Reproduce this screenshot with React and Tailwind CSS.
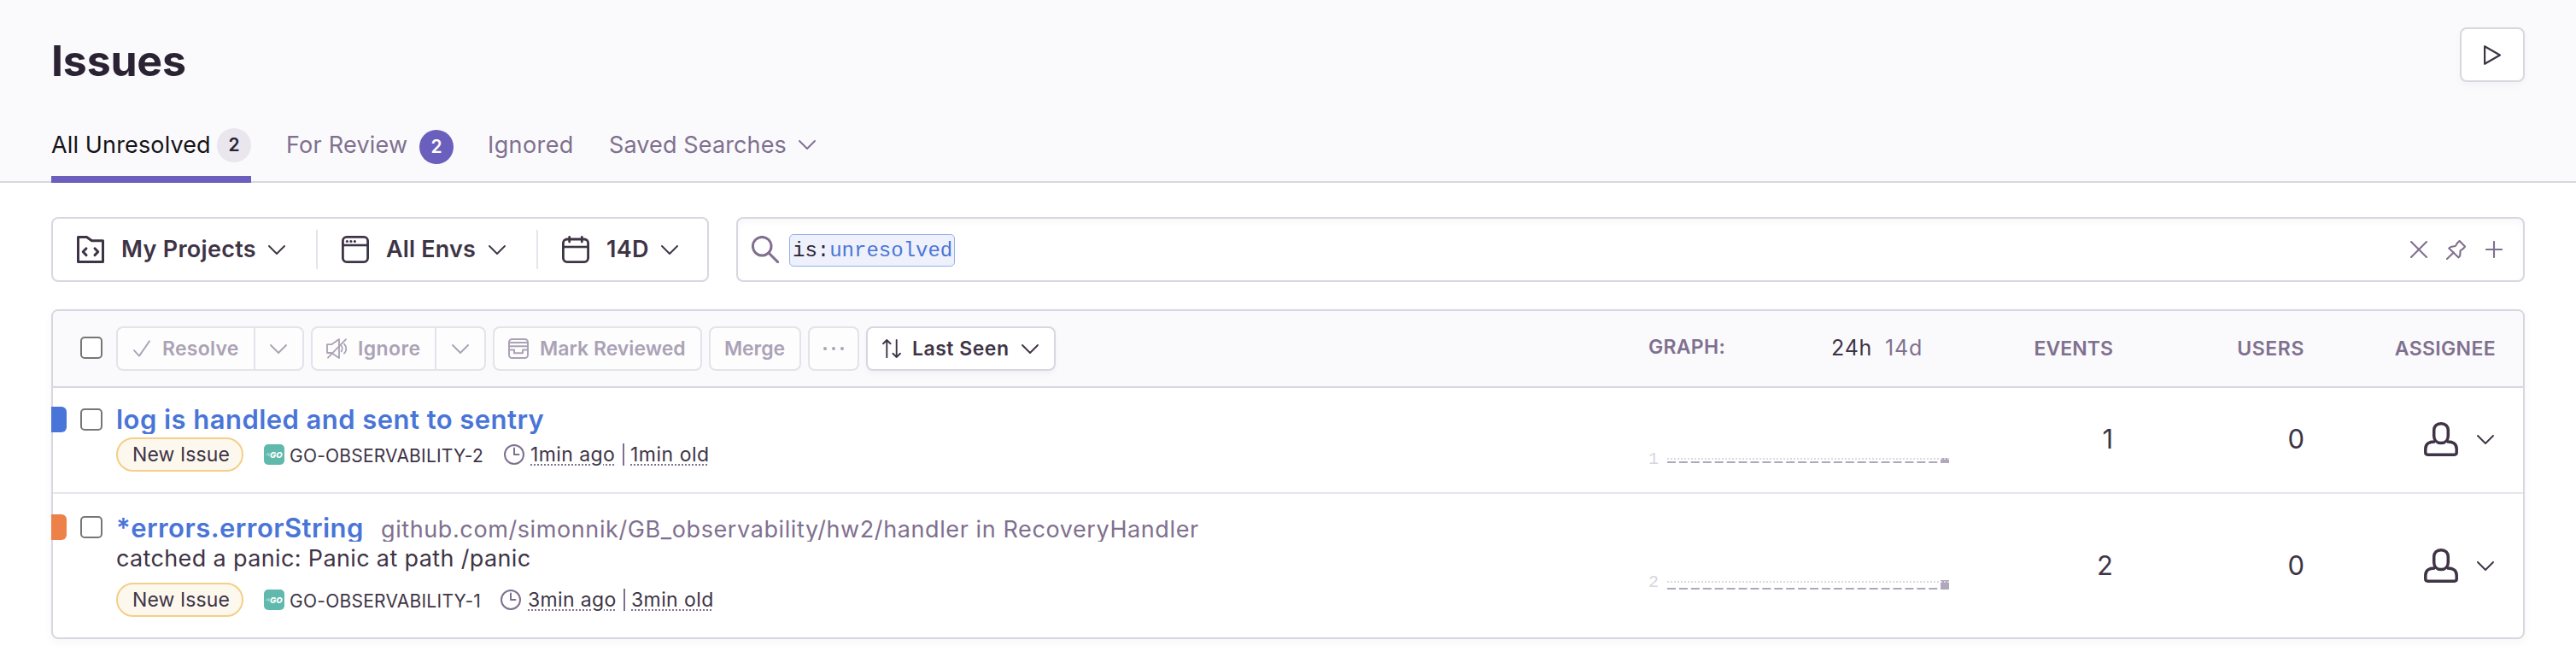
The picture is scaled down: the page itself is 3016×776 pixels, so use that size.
import React from "react";

function Chevron({ className = "" }) {
  return (
    <svg className={`h-[11px] w-5 shrink-0 ${className}`} viewBox="0 0 20 11" fill="none" stroke="currentColor" strokeWidth="1.9" strokeLinecap="round" strokeLinejoin="round">
      <path d="M1 1l9 9 9-9" />
    </svg>
  );
}

function ProjectIcon() {
  return (
    <svg className="size-8 shrink-0" viewBox="0 0 32 32" fill="none" stroke="currentColor" strokeWidth="3" strokeLinejoin="round" strokeLinecap="round">
      <path d="M1.5 1.5H11.5L17.5 5.8H30.5V30.5H1.5Z" />
      <path d="M11 14.8L7.2 18.8L11 22.6M21 14.8L24.8 18.8L21 22.6" />
    </svg>
  );
}

function WindowIcon() {
  return (
    <svg className="size-8 shrink-0" viewBox="0 0 32 32" fill="none" stroke="currentColor" strokeWidth="2.8">
      <rect x="1.4" y="1.4" width="29.2" height="29.2" rx="4.5" />
      <path d="M1.5 11H30.5" strokeWidth="2.6" />
      <g fill="currentColor" stroke="none">
        <circle cx="6.4" cy="6.5" r="1.6" />
        <circle cx="10.9" cy="6.5" r="1.6" />
        <circle cx="15.4" cy="6.5" r="1.6" />
      </g>
    </svg>
  );
}

function CalendarIcon() {
  return (
    <svg className="size-8 shrink-0" viewBox="0 0 32 32" fill="none" stroke="currentColor" strokeWidth="2.8" strokeLinecap="round">
      <rect x="1.4" y="4" width="29.2" height="26.6" rx="4.5" />
      <path d="M2 13H30" strokeWidth="2.6" strokeLinecap="butt" />
      <path d="M8.7 1.4V7M23.3 1.4V7" />
    </svg>
  );
}

function SearchIcon() {
  return (
    <svg className="size-8 shrink-0" viewBox="0 0 32 32" fill="none" stroke="currentColor" strokeWidth="3" strokeLinecap="round">
      <circle cx="12.2" cy="12.2" r="10.8" />
      <path d="M20 20L30.6 30.6" />
    </svg>
  );
}

function MuteIcon() {
  return (
    <svg className="size-6 shrink-0" viewBox="0 0 24 24" fill="none" stroke="currentColor" strokeWidth="1.8" strokeLinecap="round" strokeLinejoin="round">
      <path d="M1 7.2H6L15 1V23L6 17H1Z" />
      <path d="M2 22.6L23 1.2" />
      <path d="M17.6 8.8C19 10.6 19 13.6 17.6 15.4" />
      <path d="M21 6.6C24 9.8 24 14.6 21 17.6" />
    </svg>
  );
}

function InboxIcon() {
  return (
    <svg className="size-6 shrink-0" viewBox="0 0 24 24" fill="none" stroke="currentColor" strokeWidth="2" strokeLinejoin="round">
      <rect x="1" y="1" width="22" height="22" rx="3.5" />
      <path d="M1 5H23M1 9.2H23" />
      <path d="M1 13.4H7V17.2H17V13.4H23" />
    </svg>
  );
}

function UserIcon() {
  return (
    <svg className="size-10 shrink-0" viewBox="0 0 40 40" fill="none" stroke="currentColor" strokeWidth="3.5" strokeLinejoin="round">
      <path d="M20 1.8C14.6 1.8 11.7 5 11.7 9.6V16.2C11.7 21.4 15 24.6 20 24.6C25 24.6 28.3 21.4 28.3 16.2V9.6C28.3 5 25.4 1.8 20 1.8Z" />
      <path d="M13 23C6 22.7 1.8 25.4 1.8 31.4V35.6C1.8 37.3 2.8 38.2 4.4 38.2H35.6C37.2 38.2 38.2 37.3 38.2 35.6V31.4C38.2 25.4 34 22.7 27 23" />
    </svg>
  );
}

function ClockIcon() {
  return (
    <svg className="size-6 shrink-0 text-[#80708f]" viewBox="0 0 24 24" fill="none" stroke="currentColor" strokeWidth="2" strokeLinecap="round" strokeLinejoin="round">
      <circle cx="12" cy="12" r="11" />
      <path d="M12 4.5V12H17.5" />
    </svg>
  );
}

function GoBadge() {
  return (
    <svg className="ml-6 size-6 shrink-0" viewBox="0 0 24 24">
      <rect width="24" height="24" rx="5" fill="#5fb9ad" />
      <path d="M3.6 11H7M2 12.2H6.6M5 13.4H6.6" stroke="#fff" strokeWidth="0.6" opacity="0.8" />
      <text x="7" y="15.6" fontFamily="Inter, sans-serif" fontSize="9.4" fontWeight="800" fontStyle="italic" textLength="14.6" lengthAdjust="spacingAndGlyphs" fill="#fff">GO</text>
    </svg>
  );
}

function Checkbox({ className = "" }) {
  return <span className={`size-[26px] shrink-0 rounded-[5px] border-2 border-[#767676] bg-white ${className}`} />;
}

function Divider() {
  return <span className="ml-9 mr-7 h-[46px] w-0.5 shrink-0 bg-[#e6e4ec]" />;
}

const action = "flex h-[52px] shrink-0 items-center rounded-lg border-2 border-[#e4e2ea] bg-[#fdfdfe] text-[23px] font-semibold text-[#aba2b5]";

function Chart({ label, tall }) {
  const dashes = Array.from({ length: 23 }, (_, i) => i);
  return (
    <div className={`flex w-[352px] shrink-0 items-start ${tall ? "mt-24" : "mt-[72px]"}`}>
      <span className={`w-[22px] font-['Liberation_Mono',monospace] text-[20px] text-[#d9d5e0] ${tall ? "leading-4" : "leading-6"}`}>{label}</span>
      <svg className="h-4 w-[330px]" viewBox="0 0 330 16">
        {dashes.map((i) => (
          <rect key={i} x={i * 13.92} y="14" width="10" height="2" fill="#b0a8ba" />
        ))}
        <rect x="320" y={tall ? 5 : 10} width="10" height={tall ? 11 : 6} fill="#b0a8ba" />
        <path d={tall ? "M0 7H330" : "M0 11H330"} stroke="#dcd9e3" strokeWidth="2" strokeDasharray="2 2" />
      </svg>
    </div>
  );
}

function RightCells({ label, tall, events, users }) {
  return (
    <div className="ml-auto flex shrink-0 items-start pr-8">
      <Chart label={label} tall={tall} />
      <div className={`flex h-[60px] items-center text-[31px] ${tall ? "mt-[54px]" : "mt-[30px]"}`}>
        <span className="w-48 text-right">{events}</span>
        <span className="w-56 text-right">{users}</span>
        <span className="flex w-56 items-center justify-end gap-[22px] pr-0.5">
          <UserIcon />
          <Chevron />
        </span>
      </div>
    </div>
  );
}

function Pill() {
  return (
    <span className="flex h-10 w-[149px] shrink-0 items-center rounded-full border-2 border-[#f3cf88] bg-[#fdf8ee] pl-[17px] text-[23px] tracking-[0.1px]">
      New Issue
    </span>
  );
}

const stamp = "shrink-0 text-[23px] leading-[26px] underline decoration-dotted decoration-2 underline-offset-[3px] decoration-[#80708f]";

export default function App() {
  return (
    <div className="min-h-[776px] w-[3016px] whitespace-nowrap bg-white font-['Inter','Liberation_Sans',sans-serif] text-[#3e3446]">
      <header className="flex h-[214px] flex-col justify-between border-b-2 border-[#d9d6e1] bg-[#fafafc] px-[60px]">
        <div className="flex items-start justify-between pt-8">
          <h1 className="text-[50px] font-bold leading-[78px] tracking-[-0.2px] text-[#2b2233]">Issues</h1>
          <button className="flex h-16 w-[76px] items-center justify-center rounded-lg border-2 border-[#d9d6e1] bg-white shadow-[0_4px_8px_rgba(43,34,51,0.03)]">
            <svg className="h-[23px] w-5" viewBox="0 0 20 23" fill="none" stroke="currentColor" strokeWidth="2.2" strokeLinejoin="round">
              <path d="M1.1 1.2V21.8L18.9 11.5Z" />
            </svg>
          </button>
        </div>
        <nav className="-mb-0.5 flex h-[72px] items-start text-[27px] leading-[56px] text-[#80708f]">
          <div className="flex h-[72px] w-[234px] border-b-8 border-[#6b5fbd] text-[#161318]">
            <span className="w-[194px] tracking-[0.14px]">All Unresolved</span>
            <span className="mt-2 size-10 rounded-full bg-[#e9e6ee] text-center text-[21px] font-semibold leading-10 text-[#2b2233]">2</span>
          </div>
          <div className="ml-[41px] flex">
            <span className="w-[156px] tracking-[0.23px]">For Review</span>
            <span className="mt-2.5 size-10 rounded-full bg-[#6b5fbd] text-center text-[21px] font-semibold leading-10 text-white">2</span>
          </div>
          <span className="ml-10 w-[142px] tracking-[0.4px]">Ignored</span>
          <span className="w-[222px] tracking-[0.12px]">Saved Searches</span>
          <Chevron className="mt-[22px]" />
        </nav>
      </header>

      <main className="px-[60px]">
        <div className="mt-10 flex h-[76px] gap-8">
          <div className="flex w-[770px] shrink-0 items-center rounded-lg border-2 border-[#d9d6e1] pl-7 text-[27px] font-semibold">
            <ProjectIcon />
            <span className="ml-5 w-[172px] tracking-[0.3px]">My Projects</span>
            <Chevron />
            <Divider />
            <WindowIcon />
            <span className="ml-5 w-[120px] tracking-[0.15px]">All Envs</span>
            <Chevron />
            <Divider />
            <CalendarIcon />
            <span className="ml-5 w-16 tracking-[0.3px]">14D</span>
            <Chevron />
          </div>
          <div className="flex flex-1 items-center rounded-lg border-2 border-[#d9d6e1] pl-4 pr-6 text-[#80708f] shadow-[inset_0_4px_8px_rgba(43,34,51,0.03)]">
            <SearchIcon />
            <span className="ml-3 mt-0.5 flex h-[38px] w-[194px] items-center rounded-[5px] border border-[#94b0ea] bg-[#eef1fb] pl-[3px] pt-0.5 font-['Liberation_Mono',monospace] text-[24px] leading-8 text-[#4a75d8]">
              <span className="text-[#2b2233]">is:</span>unresolved
            </span>
            <svg className="ml-auto size-5" viewBox="0 0 20 20" fill="none" stroke="currentColor" strokeWidth="2.1" strokeLinecap="round">
              <path d="M1 1L19 19M19 1L1 19" />
            </svg>
            <svg className="ml-[22px] size-[23px]" viewBox="0 0 23 23" fill="none" stroke="currentColor" strokeWidth="2.1" strokeLinecap="round" strokeLinejoin="round">
              <path d="M15.6 1L22 7.6L19.8 10.2L16.6 12.4L16.2 18.4L14.6 20.4L3.2 9.6L5.4 8L10.8 7L13 3.6Z" />
              <path d="M8.8 14.4L1 22" />
            </svg>
            <svg className="ml-[23px] size-5" viewBox="0 0 20 20" fill="none" stroke="currentColor" strokeWidth="2.1" strokeLinecap="round">
              <path d="M10 1V19M1 10H19" />
            </svg>
          </div>
        </div>

        <section className="mt-8 h-[386px] rounded-lg border-2 border-[#d9d6e1] shadow-[0_4px_12px_rgba(43,34,51,0.04)]">
          <div className="flex h-[90px] items-center rounded-t-md border-b-2 border-[#d9d6e1] bg-[#fafafc] pl-8">
            <Checkbox className="-mt-0.5 mr-4" />
            <div className={`${action} mr-2 w-[220px]`}>
              <span className="flex h-12 w-[161px] items-center border-r-2 border-[#e4e2ea] pl-[18px]">
                <svg className="h-5 w-5" viewBox="0 0 20 20" fill="none" stroke="currentColor" strokeWidth="1.9" strokeLinecap="round" strokeLinejoin="round">
                  <path d="M1 12.2L7 18.6L19 1.2" />
                </svg>
                <span className="ml-3.5 tracking-[0.25px]">Resolve</span>
              </span>
              <Chevron className="ml-[17px]" />
            </div>
            <div className={`${action} mr-2 w-[205px]`}>
              <span className="flex h-12 w-[145px] items-center border-r-2 border-[#e4e2ea] pl-4">
                <MuteIcon />
                <span className="ml-[13px] tracking-[0.4px]">Ignore</span>
              </span>
              <Chevron className="mx-auto" />
            </div>
            <div className={`${action} mr-2 w-[245px] pl-4`}>
              <InboxIcon />
              <span className="ml-[13px] tracking-[0.02px]">Mark Reviewed</span>
            </div>
            <div className={`${action} mr-2 w-[108px] pl-4 tracking-[-0.1px]`}>Merge</div>
            <div className={`${action} mr-2 w-[60px] justify-center gap-1.5`}>
              <span className="size-1 rounded-full bg-current" />
              <span className="size-1 rounded-full bg-current" />
              <span className="size-1 rounded-full bg-current" />
            </div>
            <div className="flex h-[52px] w-[222px] shrink-0 items-center rounded-lg border-2 border-[#d9d6e1] bg-white pl-[17px] text-[23px] font-semibold shadow-[0_4px_6px_rgba(43,34,51,0.03)]">
              <svg className="h-[22px] w-[22px]" viewBox="0 0 22 22" fill="none" stroke="currentColor" strokeWidth="1.9" strokeLinecap="round" strokeLinejoin="round">
                <path d="M5.3 21.2V1M1 5.2L5.3 1L9.6 5.2" />
                <path d="M16.7 1V21M12.4 16.8L16.7 21L21 16.8" />
              </svg>
              <span className="ml-[13px] w-32 tracking-[0.5px]">Last Seen</span>
              <Chevron />
            </div>
            <div className="ml-auto flex items-center pr-8 text-[23px] font-semibold text-[#80708f]">
              <span className="-mt-1 w-[214px] tracking-[0.3px]">GRAPH:</span>
              <span className="w-[63px] text-[25px] font-normal tracking-[0.77px] text-[#3e3446]">24h</span>
              <span className="w-[75px] text-[25px] font-normal tracking-[0.8px]">14d</span>
              <span className="w-48 text-right tracking-[0.05px]">EVENTS</span>
              <span className="w-56 text-right tracking-[0.6px]">USERS</span>
              <span className="w-56 text-right tracking-[0.35px]">ASSIGNEE</span>
            </div>
          </div>

          <div className="flex h-[124px] items-start border-b-2 border-[#e7e5ec]">
            <span className="-ml-0.5 mt-[22px] h-[30px] w-[18px] rounded-r-md bg-[#4a75d8]" />
            <Checkbox className="ml-4 mt-6" />
            <div className="ml-4 mt-5">
              <div className="h-[34px] overflow-hidden text-[31px] font-semibold leading-[34px] tracking-[0.45px] text-[#4a75d8]">log is handled and sent to sentry</div>
              <div className="mt-1 flex h-10 items-center">
                <Pill />
                <GoBadge />
                <span className="ml-1.5 w-[251px] pt-[3px] text-[21px] tracking-[0.21px]">GO-OBSERVABILITY-2</span>
                <ClockIcon />
                <span className={`${stamp} ml-[7px] w-[98px] tracking-[0.4px]`}>1min ago</span>
                <span className="ml-2.5 mr-[7px] h-[26px] w-0.5 bg-[#80708f]" />
                <span className={`${stamp} tracking-[0.5px]`}>1min old</span>
              </div>
            </div>
            <RightCells label="1" events="1" users="0" />
          </div>

          <div className="flex h-[168px] items-start">
            <span className="-ml-0.5 mt-6 h-[30px] w-[18px] rounded-r-md bg-[#ee8049]" />
            <Checkbox className="ml-4 mt-[26px]" />
            <div className="ml-4 mt-[23px]">
              <div className="flex h-[33px] items-baseline overflow-hidden">
                <span className="w-[310px] text-[31px] font-semibold leading-[34px] tracking-[0.45px] text-[#4a75d8]">*errors.errorString</span>
                <span className="text-[27px] leading-[30px] tracking-[0.6px] text-[#80708f]">github.com/simonnik/GB_observability/hw2/handler in RecoveryHandler</span>
              </div>
              <div className="text-[27px] leading-10 tracking-[0.36px]">catched a panic: Panic at path /panic</div>
              <div className="mt-2 flex h-10 items-center">
                <Pill />
                <GoBadge />
                <span className="ml-1.5 w-[247px] pt-[3px] text-[21px] tracking-[0.25px]">GO-OBSERVABILITY-1</span>
                <ClockIcon />
                <span className={`${stamp} ml-2 w-[103px] tracking-[0.36px]`}>3min ago</span>
                <span className="ml-[9px] mr-[7px] h-[26px] w-0.5 bg-[#80708f]" />
                <span className={`${stamp} tracking-[0.4px]`}>3min old</span>
              </div>
            </div>
            <RightCells label="2" tall events="2" users="0" />
          </div>
        </section>
      </main>
    </div>
  );
}
